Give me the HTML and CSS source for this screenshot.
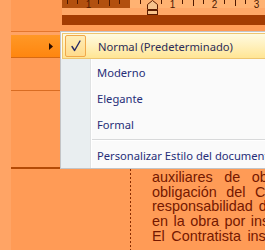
FILE: index.html
```html
<!DOCTYPE html>
<html lang="es">
<head>
<meta charset="utf-8">
<title>Estilo del documento</title>
<link rel="stylesheet" href="styles.css">
</head>
<body>
<div class="screen">
  <div class="strip"></div>
  <div class="main">
    <div class="top">
      <div class="top-left"></div>
      <div class="ruler-area">
        <svg class="ruler" width="203" height="15" viewBox="0 0 203 15">
          <rect x="0" y="0" width="68" height="8" fill="#b2500f"/>
          <rect x="68" y="0" width="135" height="8" fill="#ffb272"/>
          <rect x="0" y="8" width="203" height="7" fill="#ffa868"/>
          <g stroke="#4e1800" stroke-width="1">
            <line x1="5.5" y1="0" x2="5.5" y2="4"/>
            <line x1="15.5" y1="0" x2="15.5" y2="4"/>
            <line x1="36.5" y1="0" x2="36.5" y2="4"/>
            <line x1="47.5" y1="0" x2="47.5" y2="6"/>
            <line x1="57.5" y1="0" x2="57.5" y2="4"/>
            <line x1="78.5" y1="0" x2="78.5" y2="4"/>
            <line x1="99.5" y1="0" x2="99.5" y2="4"/>
            <line x1="120.5" y1="0" x2="120.5" y2="4"/>
            <line x1="131.5" y1="0" x2="131.5" y2="6"/>
            <line x1="141.5" y1="0" x2="141.5" y2="4"/>
            <line x1="162.5" y1="0" x2="162.5" y2="4"/>
            <line x1="173.5" y1="0" x2="173.5" y2="6"/>
            <line x1="183.5" y1="0" x2="183.5" y2="4"/>
          </g>
          <g class="ruler-num" fill="#4e1800">
            <text x="26.5" y="7.5" text-anchor="middle">1</text>
            <text x="110.5" y="7.5" text-anchor="middle">1</text>
            <text x="152.5" y="7.5" text-anchor="middle">2</text>
            <text x="194.5" y="7.5" text-anchor="middle">3</text>
          </g>
          <g fill="#f7c38c" stroke="#5c1c00" stroke-width="1">
            <path d="M85.5 9.5 V4.5 L90.5 0.5 L95.5 4.5 V9.5 Z"/>
            <rect x="85.5" y="10.5" width="10" height="4"/>
          </g>
        </svg>
        <div class="band-dark"></div>
      </div>
    </div>
    <div class="mid">
      <div class="parent">
        <div class="parent-pad"></div>
        <div class="parent-item">
          <svg width="4" height="7" viewBox="0 0 4 7"><path d="M0 0 L4 3.5 L0 7 Z" fill="#2a0c00"/></svg>
        </div>
        <div class="parent-rest"></div>
        <div class="parent-rest2"></div>
      </div>
      <div class="menu">
        <div class="menu-item selected">
          <span class="gut">
            <span class="checkbox">
              <svg width="12" height="12" viewBox="0 0 12 12"><path d="M2 6.5 L4.6 10.5 L10 1" fill="none" stroke="#252a66" stroke-width="1.4" stroke-linecap="round" stroke-linejoin="round"/></svg>
            </span>
          </span>
          <span class="label">Normal (Predeterminado)</span>
        </div>
        <div class="menu-item"><span class="gut"></span><span class="label">Moderno</span></div>
        <div class="menu-item"><span class="gut"></span><span class="label">Elegante</span></div>
        <div class="menu-item"><span class="gut"></span><span class="label">Formal</span></div>
        <div class="menu-sep"><span class="gut"></span><span class="sep-line"></span></div>
        <div class="menu-item last"><span class="gut"></span><span class="label">Personalizar Estilo del documento...</span></div>
      </div>
    </div>
    <div class="doc">
      <div class="doc-margin"></div>
      <div class="doc-text">
        <div class="l1">auxiliares de obra</div>
        <div class="l2">obligación del Contratista</div>
        <div class="l3">responsabilidad del</div>
        <div class="l4">en la obra por inspección</div>
        <div class="l5">El Contratista inspeccionará</div>
      </div>
    </div>
  </div>
</div>
</body>
</html>
```

FILE: styles.css
```css
* { box-sizing: border-box; }
html, body { margin: 0; padding: 0; }
body {
  width: 265px;
  height: 250px;
  overflow: hidden;
  background: #ff9b56;
  font-family: "Noto Sans", "Open Sans", sans-serif;
}
.screen {
  display: flex;
  width: 265px;
  height: 250px;
}
.strip {
  width: 11px;
  flex: none;
  background: #ffa465;
}
.main {
  flex: 1;
  display: flex;
  flex-direction: column;
  min-width: 0;
}
.top {
  height: 31px;
  display: flex;
  flex: none;
}
.top-left {
  width: 51px;
  flex: none;
}
.ruler-area {
  flex: 1;
  display: flex;
  flex-direction: column;
}
.ruler { display: block; }
.ruler-num text {
  font-family: "Liberation Sans", sans-serif;
  font-size: 10px;
}
.band-dark {
  height: 10px;
  background: #a43c02;
}
.mid {
  display: flex;
  height: 138px;
  flex: none;
}
.parent {
  width: 49px;
  flex: none;
  display: flex;
  flex-direction: column;
  border-top: 1px solid #e4772c;
  border-bottom: 2px solid #b44a06;
}
.parent-pad {
  height: 3px;
  background: #ffa364;
}
.parent-item {
  height: 23px;
  background: linear-gradient(#ff9826, #ff860f);
  border-bottom: 1px solid #d86a12;
  display: flex;
  align-items: center;
  justify-content: flex-end;
  padding-right: 7px;
}
.parent-item svg { display: block; }
.parent-rest {
  height: 33px;
  border-bottom: 1px solid #d96c22;
}
.parent-rest2 { flex: 1; }
.menu {
  flex: 1;
  background: #fafafa;
  border: 1px solid #c3c4c6;
  border-right: none;
  padding-top: 1px;
  display: flex;
  flex-direction: column;
  min-width: 0;
}
.menu-item {
  height: 26px;
  display: flex;
  align-items: center;
  white-space: nowrap;
  font-size: 11.2px;
  color: #262e78;
}
.menu-item.last { height: 25px; }
.gut {
  width: 30px;
  align-self: stretch;
  flex: none;
  background: #e9eef0;
  border-right: 1px solid #e0e2e3;
  box-shadow: 1px 0 0 #ffffff;
  display: flex;
  align-items: center;
  padding-left: 3px;
}
.label {
  padding-left: 6px;
}
.menu-item.selected {
  border: 1px solid #eec670;
  border-right: none;
  margin-left: 1px;
  background: linear-gradient(#fffae0, #fff0bc 50%, #ffe594);
  color: #2c2c58;
}
.menu-item.selected .gut {
  background: transparent;
  border-right-color: transparent;
  box-shadow: none;
  width: 29px;
  padding-left: 2px;
}
.checkbox {
  width: 21px;
  height: 22px;
  border: 1px solid #f1a84a;
  border-radius: 2px;
  background: linear-gradient(#ffedb6, #ffdb8c);
  display: flex;
  align-items: center;
  justify-content: center;
}
.checkbox svg { display: block; }
.menu-sep {
  height: 6px;
  display: flex;
}
.menu-sep .gut { height: 6px; }
.sep-line {
  flex: 1;
  margin-top: 2px;
  margin-left: 1px;
  height: 1px;
  background: #d8d9da;
  border-bottom: 1px solid #ffffff;
  box-sizing: content-box;
}
.doc {
  flex: 1;
  display: flex;
  overflow: hidden;
}
.doc-margin {
  width: 121px;
  flex: none;
  border-right: 1px solid transparent;
  background: linear-gradient(#8a2c00 50%, transparent 50%) right top / 1px 4px repeat-y;
}
.doc-text {
  padding-left: 20px;
  margin-top: 1px;
  font-family: "Liberation Sans", Arial, sans-serif;
  font-size: 14.4px;
  line-height: 14.7px;
  color: #741800;
  white-space: nowrap;
}
.l1 { word-spacing: 7.5px; }
.l2 { word-spacing: 5.5px; }
.l3 { word-spacing: 2px; }
.l4 { word-spacing: 1.5px; }
.l5 { word-spacing: 2.5px; }
```
